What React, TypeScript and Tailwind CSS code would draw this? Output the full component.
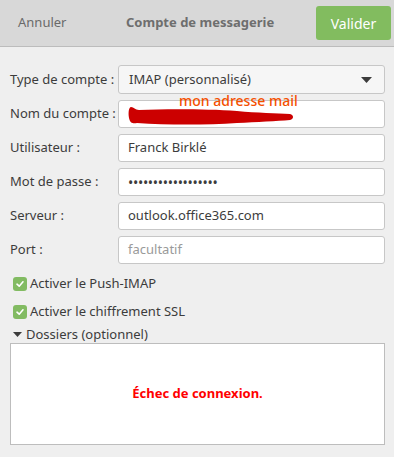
import React from "react";

const font = { fontFamily: '"Noto Sans", "Open Sans", sans-serif' };

const Field = ({ label, children }: { label: string; children: React.ReactNode }) => (
  <div className="flex items-center h-[28px]">
    <span className="w-[108px] text-[13px] text-[#3c3c3c]">{label}</span>
    <div className="flex-1">{children}</div>
  </div>
);

const inputCls =
  "h-[28px] w-full rounded-[3px] border border-[#c7c7c7] bg-white px-[9px] text-[13px] text-[#3c3c3c] flex items-center";

const Check = ({ label }: { label: string }) => (
  <div className="flex items-center gap-[3px] pl-[13px] h-[20px]">
    <span className="w-[14px] h-[14px] rounded-[3px] bg-[#82bb62] flex items-center justify-center">
      <svg width="10" height="10" viewBox="0 0 10 10">
        <path d="M2 5.2 L4.2 7.2 L8 2.8" stroke="white" strokeWidth="1.6" fill="none" strokeLinecap="round" strokeLinejoin="round" />
      </svg>
    </span>
    <span className="text-[13px] text-[#3c3c3c]">{label}</span>
  </div>
);

const App = () => {
  return (
    <div className="w-[394px] h-[457px] bg-[#efefef] flex flex-col" style={font}>
      <div className="h-[47px] bg-[#d8d8d8] border-b border-[#bcbcbc] flex items-center pl-[18px] pr-[3px]">
        <span className="text-[13px] text-[#6a6a6a] w-[108px]">Annuler</span>
        <span className="text-[13px] font-bold text-[#6e6e6e] flex-1">Compte de messagerie</span>
        <button className="w-[75px] h-[34px] rounded-[3px] bg-[#82bc5f] text-white text-[14px]">Valider</button>
      </div>
      <div className="flex flex-col gap-[6px] pl-[10px] pr-[9px] pt-[18px]">
        <div className="flex items-center h-[29px]">
          <span className="w-[108px] text-[13px] text-[#3c3c3c]">Type de compte :</span>
          <div className="flex-1 h-[29px] rounded-[3px] border border-[#c7c7c7] bg-[#f6f6f6] flex items-center justify-between pl-[10px] pr-[12px] text-[13px] text-[#3c3c3c]">
            <span>IMAP (personnalisé)</span>
            <svg width="11" height="6" viewBox="0 0 11 6">
              <path d="M0 0 H11 L5.5 6 Z" fill="#3c3c3c" />
            </svg>
          </div>
        </div>
        <Field label="Nom du compte :">
          <div className={inputCls + " relative"}>
            <svg className="absolute left-[8px] top-[3px]" width="170" height="22" viewBox="0 0 170 22">
              <path
                d="M4 3 C2 3 1 8 2 14 C3 19 6 20 10 19 C40 21 80 21 110 19 C130 18 150 17 163 16 C167 15 167 11 163 10 C150 9 130 9 110 7 C80 5 40 5 12 6 C8 6 7 3 4 3 Z"
                fill="#cc0000"
              />
            </svg>
            <span className="absolute left-[60px] top-[-7px] text-[14px] font-medium text-[#f45000] leading-none">mon adresse mail</span>
          </div>
        </Field>
        <Field label="Utilisateur :">
          <div className={inputCls}>Franck Birklé</div>
        </Field>
        <Field label="Mot de passe :">
          <div className={inputCls + " text-[14px] tracking-[-0.3px]"}>••••••••••••••••••</div>
        </Field>
        <Field label="Serveur :">
          <div className={inputCls}>outlook.office365.com</div>
        </Field>
        <Field label="Port :">
          <div className={inputCls + " text-[#9a9a9a]"}>facultatif</div>
        </Field>
      </div>
      <div className="flex flex-col gap-[8px] pt-[10px]">
        <Check label="Activer le Push-IMAP" />
        <Check label="Activer le chiffrement SSL" />
      </div>
      <div className="flex items-center gap-[4px] pl-[13px] h-[16px] mt-[5px]">
        <svg width="9" height="6" viewBox="0 0 9 6">
          <path d="M0 0 H9 L4.5 5 Z" fill="#3c3c3c" />
        </svg>
        <span className="text-[13px] text-[#3c3c3c]">Dossiers (optionnel)</span>
      </div>
      <div className="ml-[10px] mr-[9px] mt-0 h-[102px] bg-white border border-[#bdbdbd] flex items-center justify-center">
        <span className="text-[13px] font-bold text-[#ff0000]">Échec de connexion.</span>
      </div>
    </div>
  );
};

export default App;
